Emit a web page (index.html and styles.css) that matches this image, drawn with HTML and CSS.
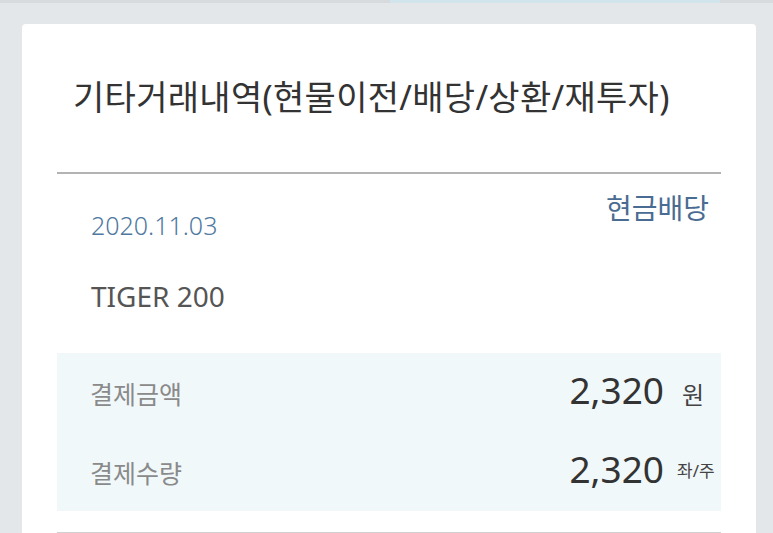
FILE: index.html
```html
<!DOCTYPE html>
<html lang="ko">
<head>
<meta charset="utf-8">
<title>기타거래내역</title>
<link rel="stylesheet" href="styles.css">
</head>
<body>
<div class="topbar"><div class="topbar-accent"></div></div>
<main class="card">
  <h1 class="title">기타거래내역(현물이전/배당/상환/재투자)</h1>
  <section class="entry">
    <div class="entry-head">
      <div class="entry-info">
        <div class="date">2020.11.03</div>
        <div class="name">TIGER 200</div>
      </div>
      <div class="category">현금배당</div>
    </div>
    <div class="amounts">
      <div class="amount-row">
        <span class="label">결제금액</span>
        <span class="value"><span class="num">2,320</span><span class="unit unit-lg">원</span></span>
      </div>
      <div class="amount-row">
        <span class="label">결제수량</span>
        <span class="value"><span class="num">2,320</span><span class="unit unit-sm">좌/주</span></span>
      </div>
    </div>
  </section>
  <div class="next-entry"></div>
</main>
</body>
</html>
```
FILE: styles.css
```css
html, body {
  margin: 0;
  padding: 0;
}
body {
  background: #e4e7e9;
  font-family: "Noto Sans", "Noto Sans CJK KR", sans-serif;
  overflow: hidden;
  height: 533px;
}
.topbar {
  height: 3px;
  background: #d8dbdd;
  display: flex;
}
.topbar-accent {
  margin-left: 390px;
  width: 330px;
  background: #d2e5ec;
}
.card {
  margin: 21px 0 0 22px;
  width: 734px;
  box-sizing: border-box;
  padding: 0 35px 200px;
  background: #ffffff;
  border-radius: 4px;
}
.title {
  margin: 0;
  padding: 53px 0 0 16px;
  font-size: 34px;
  line-height: 40px;
  font-weight: 400;
  color: #333333;
  letter-spacing: 0.3px;
}
.entry {
  margin-top: 55px;
  border-top: 2px solid #b3b3b3;
}
.entry-head {
  display: flex;
  justify-content: space-between;
  align-items: flex-start;
  padding-top: 18px;
}
.entry-info {
  padding-left: 34px;
}
.date {
  margin-top: 18px;
  font-size: 25px;
  line-height: 30px;
  color: #4f79a0;
  font-weight: 300;
}
.name {
  margin-top: 39px;
  font-size: 28px;
  line-height: 34px;
  color: #555555;
}
.category {
  font-size: 28px;
  line-height: 32px;
  color: #4a6c92;
  padding-right: 12px;
}
.amounts {
  margin-top: 40px;
  background: #f1f8fa;
}
.amount-row {
  display: flex;
  justify-content: space-between;
  align-items: baseline;
  height: 79px;
  box-sizing: border-box;
  padding: 15px 0 0 33px;
}
.label {
  font-size: 25px;
  line-height: 30px;
  color: #8a8a8a;
}
.value {
  display: flex;
  align-items: baseline;
}
.num {
  font-size: 37px;
  line-height: 44px;
  color: #333333;
}
.unit {
  width: 57px;
  box-sizing: border-box;
  color: #444444;
}
.unit-lg {
  font-size: 24px;
  padding-left: 18px;
}
.unit-sm {
  font-size: 17px;
  padding-left: 13px;
  position: relative;
  top: -6px;
}
.next-entry {
  margin-top: 21px;
  border-top: 2px solid #d0d0d0;
}
```
